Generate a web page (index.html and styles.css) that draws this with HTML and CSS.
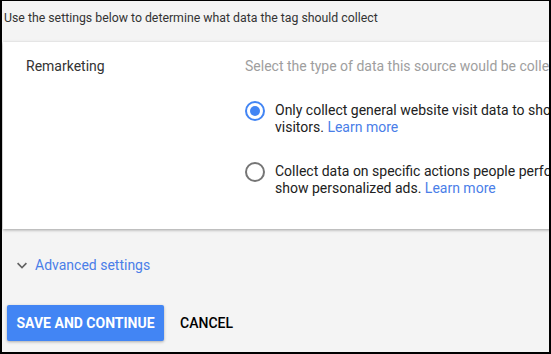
FILE: index.html
```html
<!DOCTYPE html>
<html lang="en">
<head>
    <meta charset="UTF-8">
    <title>Tag settings</title>
    <link rel="stylesheet" href="styles.css">
</head>
<body>
    <div class="frame">
        <div class="intro">Use the settings below to determine what data the tag should collect</div>

        <div class="card">
            <div class="card-label">Remarketing</div>
            <div class="card-body">
                <div class="hint">Select the type of data this source would be collecting for your ads</div>

                <label class="option">
                    <span class="radio checked"></span>
                    <span class="option-text">Only collect general website visit data to show ads to your website<br>visitors. <a href="#">Learn more</a></span>
                </label>

                <label class="option">
                    <span class="radio"></span>
                    <span class="option-text">Collect data on specific actions people performed on your website to<br>show personalized ads. <a href="#">Learn more</a></span>
                </label>
            </div>
        </div>

        <div class="advanced">
            <svg class="chevron" width="10" height="7" viewBox="0 0 10 7">
                <path d="M1.2 0.6 L5 4.4 L8.8 0.6 L10 1.8 L5 6.8 L0 1.8 Z" fill="#616161"/>
            </svg>
            <a href="#">Advanced settings</a>
        </div>

        <div class="actions">
            <button class="btn-primary">Save and continue</button>
            <button class="btn-flat">Cancel</button>
        </div>
    </div>
</body>
</html>
```

FILE: styles.css
```css
* {
    margin: 0;
    padding: 0;
    box-sizing: border-box;
}

body {
    background: #000;
    font-family: Roboto, Arial, sans-serif;
    color: #212121;
    overflow: hidden;
}

.frame {
    margin: 1px 2px 2px 2px;
    height: 351px;
    background: #f4f4f4;
    overflow: hidden;
}

.intro {
    height: 41px;
    padding: 9px 0 0 2px;
    font-size: 12.3px;
    line-height: 16px;
    color: #333;
}

.card {
    display: flex;
    width: 760px;
    height: 187px;
    margin-left: 1px;
    background: #fff;
    box-shadow: 0 1px 3px rgba(0, 0, 0, 0.35);
}

.card-label {
    width: 242px;
    flex-shrink: 0;
    padding: 14px 0 0 23px;
    font-size: 14px;
    line-height: 20px;
    color: #333;
}

.card-body {
    padding-top: 14px;
    flex: 1;
}

.hint {
    font-size: 14px;
    line-height: 20px;
    color: #9e9e9e;
    white-space: nowrap;
    margin-bottom: 26px;
}

.option {
    display: flex;
    align-items: flex-start;
    gap: 10px;
    margin-bottom: 27px;
    font-size: 14px;
    line-height: 17px;
    white-space: nowrap;
}

.radio {
    width: 20px;
    height: 20px;
    margin-top: -1px;
    border: 2px solid #757575;
    border-radius: 50%;
    flex-shrink: 0;
    display: flex;
    align-items: center;
    justify-content: center;
}

.radio.checked {
    border-color: #4285f4;
}

.radio.checked::after {
    content: '';
    width: 10px;
    height: 10px;
    border-radius: 50%;
    background: #4285f4;
}

.option-text a,
.advanced a {
    color: #4a7ee8;
    text-decoration: none;
}

.advanced {
    display: flex;
    align-items: center;
    gap: 8px;
    padding: 27px 0 0 15px;
    font-size: 14px;
    line-height: 18px;
}

.actions {
    display: flex;
    align-items: center;
    gap: 8px;
    padding: 31px 0 0 5px;
}

.btn-primary {
    height: 36px;
    padding: 0 9.5px;
    background: #4285f4;
    color: #fff;
    border: none;
    border-radius: 2px;
    box-shadow: 0 1px 3px rgba(0, 0, 0, 0.3);
    font-family: Roboto, Arial, sans-serif;
    font-weight: 700;
    font-size: 14px;
    text-transform: uppercase;
}

.btn-flat {
    height: 36px;
    padding: 0 8px;
    background: none;
    border: none;
    color: #000;
    font-family: Roboto, Arial, sans-serif;
    font-weight: 500;
    font-size: 14px;
    text-transform: uppercase;
}
```
